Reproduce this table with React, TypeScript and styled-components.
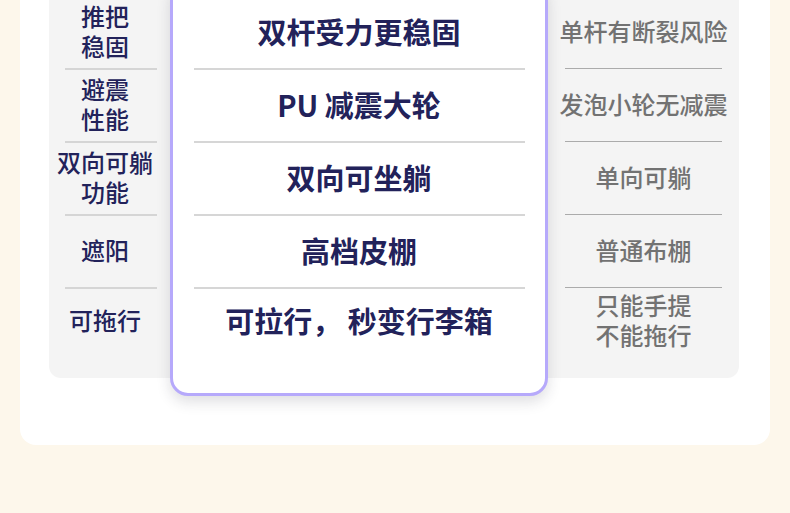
import React from "react";
import styled, { createGlobalStyle } from "styled-components";

const GlobalStyle = createGlobalStyle`
  html, body {
    margin: 0;
    padding: 0;
    background: #fdf7eb;
  }
  body {
    font-family: "Noto Sans CJK SC", "Noto Sans", sans-serif;
  }
`;

interface Row {
  label: string[];
  ours: string;
  theirs: string[];
}

const rows: Row[] = [
  { label: ["推把", "稳固"], ours: "双杆受力更稳固", theirs: ["单杆有断裂风险"] },
  { label: ["避震", "性能"], ours: "PU 减震大轮", theirs: ["发泡小轮无减震"] },
  { label: ["双向可躺", "功能"], ours: "双向可坐躺", theirs: ["单向可躺"] },
  { label: ["遮阳"], ours: "高档皮棚", theirs: ["普通布棚"] },
  { label: ["可拖行"], ours: "可拉行， 秒变行李箱", theirs: ["只能手提", "不能拖行"] },
];

const App = () => {
  const last = rows.length - 1;
  return (
    <Shell>
      <GlobalStyle />
      <Card>
        <Table>
          <SideColumn side="left">
            {rows.map((row, i) => (
              <Cell key={i} first={i === 0} last={i === last} line="#d5d5d5" inset="0 13px 0 16px">
                <LabelText>
                  {row.label.map((l) => (
                    <span key={l}>{l}</span>
                  ))}
                </LabelText>
              </Cell>
            ))}
          </SideColumn>
          <MainColumn>
            {rows.map((row, i) => (
              <Cell key={i} first={i === 0} last={i === last} line="#d6d6d6" inset="0 20px 0 21px">
                <MainText>{row.ours}</MainText>
              </Cell>
            ))}
          </MainColumn>
          <SideColumn side="right">
            {rows.map((row, i) => (
              <Cell key={i} first={i === 0} last={i === last} line="#ababab" inset="0 17px" thin>
                <OtherText>
                  {row.theirs.map((t) => (
                    <span key={t}>{t}</span>
                  ))}
                </OtherText>
              </Cell>
            ))}
          </SideColumn>
        </Table>
      </Card>
    </Shell>
  );
};

const Shell = styled.div`
  padding: 0 20px 68px;
  overflow: hidden;
`;

const Card = styled.div`
  margin-top: -40px;
  background: #ffffff;
  border-radius: 16px;
  padding: 20px 31px 49px 29px;
`;

const Table = styled.div`
  display: flex;
  align-items: flex-start;
`;

const SideColumn = styled.div<{ side: "left" | "right" }>`
  width: ${(p) => (p.side === "left" ? "121px" : "191px")};
  flex-shrink: 0;
  background: #f4f4f4;
  padding: 17px 0 25px;
  border-radius: ${(p) => (p.side === "left" ? "12px 0 0 12px" : "0 12px 12px 0")};
`;

const MainColumn = styled.div`
  width: 372px;
  flex-shrink: 0;
  background: #ffffff;
  border: 3px solid #b6a9fb;
  border-radius: 18px;
  padding: 14px 0 40px;
  box-shadow: 0 6px 14px rgba(40, 40, 60, 0.15);
  position: relative;
  z-index: 1;
`;

const Cell = styled.div<{ first: boolean; last: boolean; line: string; inset: string; thin?: boolean }>`
  position: relative;
  height: ${(p) => (p.first ? "71px" : p.last ? "66px" : "73px")};
  box-sizing: border-box;
  display: flex;
  align-items: center;
  justify-content: center;
  padding-top: ${(p) => (p.first ? "0" : "2px")};
  padding-bottom: 3px;

  &::before {
    content: "";
    display: ${(p) => (p.first ? "none" : "block")};
    position: absolute;
    top: 0;
    left: 0;
    right: 0;
    margin: ${(p) => p.inset};
    height: ${(p) => (p.thin ? "1px" : "2px")};
    background: ${(p) => p.line};
  }
`;

const LabelText = styled.div`
  display: flex;
  flex-direction: column;
  align-items: center;
  padding-right: 9px;
  font-size: 24px;
  line-height: 30px;
  font-weight: 500;
  color: #22225a;
`;

const MainText = styled.div`
  font-size: 29px;
  font-weight: 700;
  color: #22225a;
  white-space: pre;
`;

const OtherText = styled.div`
  display: flex;
  flex-direction: column;
  align-items: center;
  font-size: 24px;
  line-height: 30px;
  font-weight: 500;
  color: #727272;
`;

export default App;
